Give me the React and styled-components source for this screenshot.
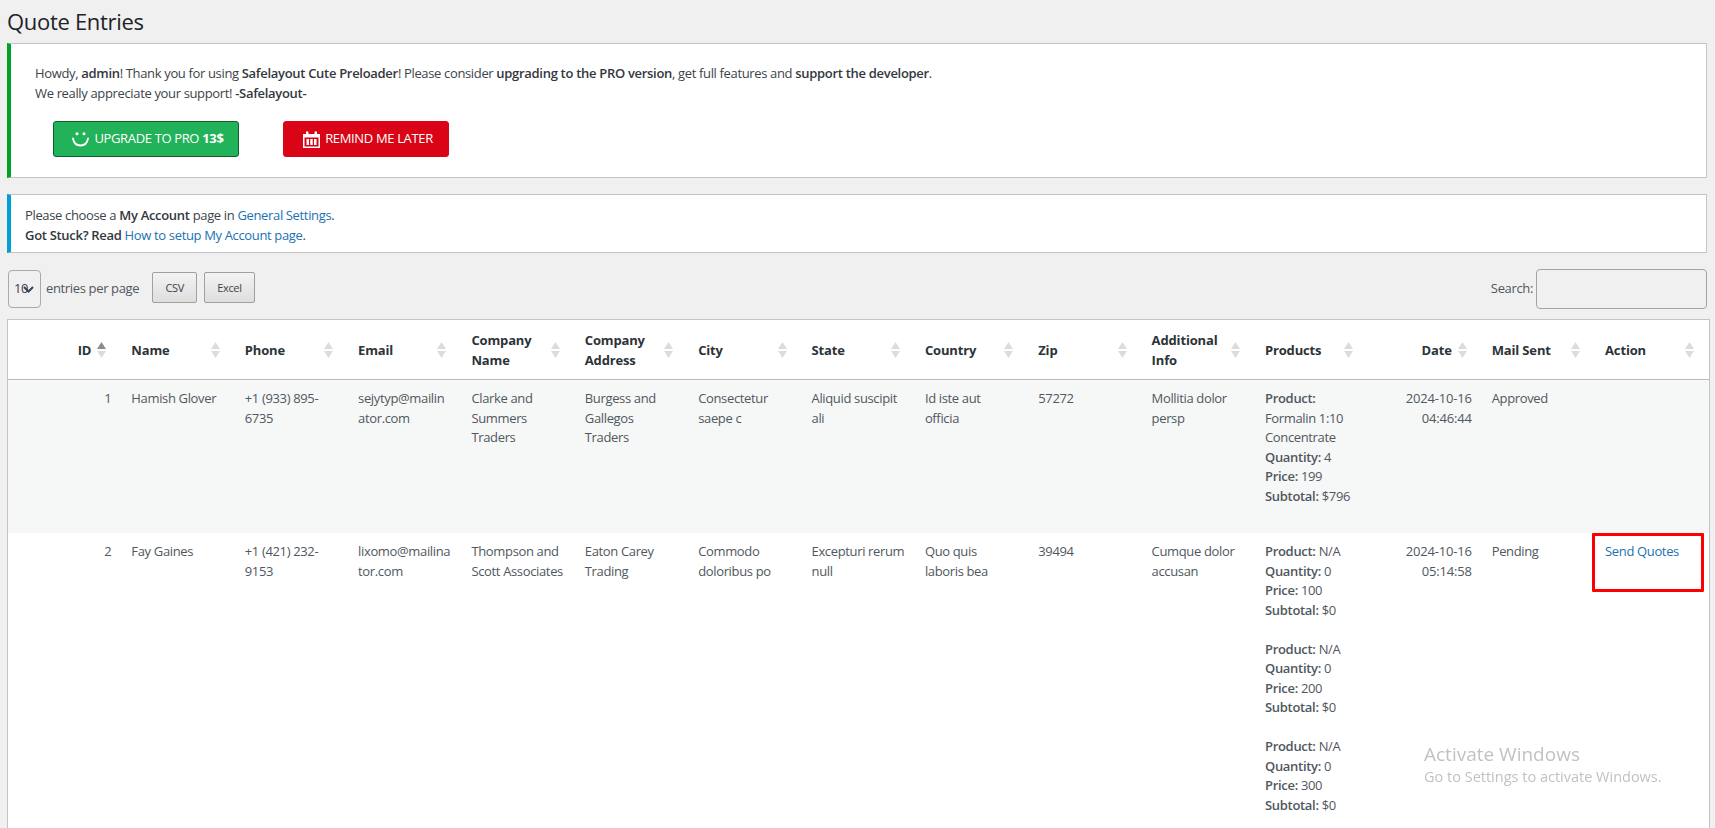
import React from "react";
import styled, { createGlobalStyle } from "styled-components";

const columns = [
  { label: "ID", right: true, sorted: true },
  { label: "Name" },
  { label: "Phone" },
  { label: "Email" },
  { label: "Company Name" },
  { label: "Company Address" },
  { label: "City" },
  { label: "State" },
  { label: "Country" },
  { label: "Zip" },
  { label: "Additional Info" },
  { label: "Products" },
  { label: "Date", right: true },
  { label: "Mail Sent" },
  { label: "Action" },
];

const entries = [
  {
    id: 1,
    cells: [
      "Hamish Glover",
      "+1 (933) 895-6735",
      "sejytyp@mailin\nator.com",
      "Clarke and Summers Traders",
      "Burgess and Gallegos Traders",
      "Consectetur saepe c",
      "Aliquid suscipit ali",
      "Id iste aut\nofficia",
      "57272",
      "Mollitia dolor persp",
    ],
    products: [{ name: "Formalin 1:10 Concentrate", quantity: 4, price: 199, subtotal: "$796" }],
    date: "2024-10-16 04:46:44",
    mail: "Approved",
  },
  {
    id: 2,
    cells: [
      "Fay Gaines",
      "+1 (421) 232-9153",
      "lixomo@mailina\ntor.com",
      "Thompson and Scott Associates",
      "Eaton Carey Trading",
      "Commodo doloribus po",
      "Excepturi rerum null",
      "Quo quis laboris bea",
      "39494",
      "Cumque dolor accusan",
    ],
    products: [
      { name: "N/A", quantity: 0, price: 100, subtotal: "$0" },
      { name: "N/A", quantity: 0, price: 200, subtotal: "$0" },
      { name: "N/A", quantity: 0, price: 300, subtotal: "$0" },
    ],
    date: "2024-10-16 05:14:58",
    mail: "Pending",
    action: "Send Quotes",
  },
];

const SmileIcon = () => (
  <svg width="17" height="15" viewBox="0 0 17 15" fill="none">
    <path d="M1 6.500c.8 4.500 3.500 7 7.500 7s6.700-2.500 7.500-7" stroke="#fff" strokeWidth="1.800" strokeLinecap="round" />
    <circle cx="5" cy="1.800" r="1.500" fill="#fff" />
    <circle cx="12" cy="1.800" r="1.500" fill="#fff" />
  </svg>
);

const CalendarIcon = () => (
  <svg width="17" height="17" viewBox="0 0 17 17" fill="#fff">
    <path d="M0 3h3V1.500a1.200 1.200 0 0 1 2.500 0V3h6V1.500a1.200 1.200 0 0 1 2.500 0V3h3v14H0z" />
    <path d="M1.500 6.500h14V15.500h-14z" fill="#d90416" />
    <path d="M3.500 8h2.500v6H3.500zM7.250 8h2.500v6h-2.500zM11 8h2.500v6H11z" />
  </svg>
);

const SortArrows = ({ active }) => (
  <svg width="9" height="16" viewBox="0 0 9 16">
    <path d="M4.500 0L9 7H0z" fill={active ? "#8a8d90" : "#dcdcde"} />
    <path d="M4.500 16L0 9h9z" fill="#dcdcde" />
  </svg>
);

const App = () => {
  return (
    <>
      <GlobalStyle />
      <Page>
        <Title>Quote Entries</Title>

        <Notice $accent="#00a32a" $padding="20px 24px">
          <NoticeText>
            Howdy, <b>admin</b>! Thank you for using <b>Safelayout Cute Preloader</b>! Please consider{" "}
            <b>upgrading to the PRO version</b>, get full features and <b>support the developer</b>.
            <br />
            We really appreciate your support! <b>-Safelayout-</b>
          </NoticeText>
          <NoticeActions>
            <ActionButton $bg="#22b35a" $border="#0f5c2c" $width="186px">
              <SmileIcon />
              <span>
                UPGRADE TO PRO <b>13$</b>
              </span>
            </ActionButton>
            <ActionButton $bg="#d90416" $border="#d90416" $width="166px">
              <CalendarIcon />
              <span>REMIND ME LATER</span>
            </ActionButton>
          </NoticeActions>
        </Notice>

        <Notice $accent="#00a0d2" $padding="11px 14px 7px">
          <NoticeText>
            Please choose a <b>My Account</b> page in <a href="#general">General Settings</a>.
            <br />
            <b>Got Stuck? Read</b> <a href="#setup">How to setup My Account page</a>.
          </NoticeText>
        </Notice>

        <Toolbar>
          <LengthGroup>
            <LengthSelect>
              10
              <svg width="11" height="8" viewBox="0 0 11 8" fill="none">
                <path d="M1 2l4.500 4.500L10 2" stroke="#3c434a" strokeWidth="2" />
              </svg>
            </LengthSelect>
            <ToolbarLabel>entries per page</ToolbarLabel>
            <ExportButton>CSV</ExportButton>
            <ExportButton>Excel</ExportButton>
          </LengthGroup>
          <SearchGroup>
            <ToolbarLabel>Search:</ToolbarLabel>
            <SearchInput type="search" aria-label="Search" />
          </SearchGroup>
        </Toolbar>

        <Table>
          <thead>
            <tr>
              {columns.map((col) => (
                <HeadCell key={col.label} $right={col.right}>
                  {col.label}
                  <SortSlot>
                    <SortArrows active={col.sorted} />
                  </SortSlot>
                </HeadCell>
              ))}
            </tr>
          </thead>
          <tbody>
            {entries.map((entry) => (
              <Row key={entry.id} $odd={entry.id % 2 === 1}>
                <Cell $right>{entry.id}</Cell>
                {entry.cells.map((text) => (
                  <Cell key={text}>{text}</Cell>
                ))}
                <Cell>
                  {entry.products.map((p) => (
                    <ProductBlock key={p.price}>
                      <b>Product:</b> {p.name}
                      <br />
                      <b>Quantity:</b> {p.quantity}
                      <br />
                      <b>Price:</b> {p.price}
                      <br />
                      <b>Subtotal:</b> {p.subtotal}
                    </ProductBlock>
                  ))}
                </Cell>
                <Cell $right>{entry.date}</Cell>
                <Cell>{entry.mail}</Cell>
                <ActionCell>
                  {entry.action && (
                    <>
                      <a href="#send">{entry.action}</a>
                      <Highlight />
                    </>
                  )}
                </ActionCell>
              </Row>
            ))}
          </tbody>
        </Table>

        <Watermark>
          <strong>Activate Windows</strong>
          <span>Go to Settings to activate Windows.</span>
        </Watermark>
      </Page>
    </>
  );
};

export default App;

const GlobalStyle = createGlobalStyle`
  html, body {
    margin: 0;
    height: 828px;
    overflow: hidden;
    background: #f0f0f1;
  }
  body {
    font-family: "Open Sans", "Noto Sans", sans-serif;
    font-size: 13px;
    line-height: 19.5px;
    color: #3c434a;
    letter-spacing: -0.35px;
  }
  a {
    color: #2271b1;
    text-decoration: none;
  }
  b {
    font-weight: 600;
    color: #32383e;
    letter-spacing: -0.3px;
  }
`;

const Page = styled.div`
  padding: 0 8px 0 7px;
`;

const Title = styled.h1`
  margin: 0;
  height: 43px;
  font-size: 22px;
  font-weight: 400;
  line-height: 43px;
  color: #1d2327;
  letter-spacing: -0.3px;
`;

const Notice = styled.div`
  box-sizing: border-box;
  margin-bottom: 16px;
  padding: ${(p) => p.$padding};
  background: #fff;
  border: 1px solid #c3c4c7;
  border-left: 4px solid ${(p) => p.$accent};
`;

const NoticeText = styled.p`
  margin: 0;
`;

const NoticeActions = styled.div`
  display: flex;
  gap: 44px;
  margin: 18px 0 0 18px;
`;

const ActionButton = styled.div`
  box-sizing: border-box;
  display: flex;
  align-items: center;
  justify-content: center;
  gap: 5px;
  width: ${(p) => p.$width};
  height: 36px;
  padding-left: 4px;
  background: ${(p) => p.$bg};
  border: 1px solid ${(p) => p.$border};
  border-radius: 3px;
  color: #fff;

  b {
    color: #fff;
    font-weight: 700;
  }
`;

const Toolbar = styled.div`
  display: flex;
  justify-content: space-between;
  align-items: center;
  height: 40px;
  margin: 16px 0 10px;
`;

const LengthGroup = styled.div`
  display: flex;
  align-items: center;
  padding-left: 1px;
`;

const LengthSelect = styled.div`
  box-sizing: border-box;
  display: flex;
  align-items: center;
  width: 33px;
  height: 38px;
  padding-left: 5px;
  border: 1px solid #a7aaad;
  border-radius: 4px;
  margin-right: 5px;

  svg {
    margin-left: -5px;
  }
`;

const ToolbarLabel = styled.span`
  color: #50575e;
`;

const ExportButton = styled.div`
  box-sizing: border-box;
  display: flex;
  align-items: center;
  justify-content: center;
  height: 31px;
  min-width: 45px;
  padding: 0 12px;
  margin-left: 7px;
  margin-top: -3px;
  font-size: 11px;
  color: #3c434a;
  background: linear-gradient(#f3f3f3, #dedede);
  border: 1px solid #a0a0a0;
  border-radius: 2px;

  ${ToolbarLabel} + & {
    margin-left: 13px;
  }
`;

const SearchGroup = styled.div`
  display: flex;
  align-items: center;
  gap: 3px;
`;

const SearchInput = styled.input`
  box-sizing: border-box;
  width: 171px;
  height: 40px;
  padding: 0 8px;
  background: transparent;
  border: 1px solid #a0a5aa;
  border-radius: 4px;
`;

const Table = styled.table`
  box-sizing: border-box;
  width: calc(100% + 2.5px);
  table-layout: fixed;
  border-collapse: separate;
  border-spacing: 0;
  background: #fff;
  border: 1px solid #c3c4c7;
  border-width: 1px 1px 0;
`;

const HeadCell = styled.th`
  position: relative;
  box-sizing: border-box;
  height: 59px;
  padding: 10px 30px 9px 10px;
  font-weight: 700;
  line-height: 20px;
  letter-spacing: -0.15px;
  color: #2c3338;
  text-align: ${(p) => (p.$right ? "right" : "left")};
  border-bottom: 1px solid #b8babd;
`;

const SortSlot = styled.span`
  position: absolute;
  top: 22px;
  right: 15px;
  display: flex;
`;

const Row = styled.tr`
  background: ${(p) => (p.$odd ? "#f6f7f7" : "#fff")};
`;

const Cell = styled.td`
  padding: 9px 10px 7.5px;
  vertical-align: top;
  white-space: pre-line;
  overflow-wrap: anywhere;
  text-align: ${(p) => (p.$right ? "right" : "left")};
  letter-spacing: ${(p) => (p.$right ? "-0.2px" : "inherit")};
  color: #50575e;
`;

const ActionCell = styled(Cell)`
  position: relative;
`;

const Highlight = styled.span`
  position: absolute;
  top: 0;
  left: -3px;
  width: 112px;
  height: 59px;
  box-sizing: border-box;
  border: 3px solid #f00;
  border-radius: 1px;
`;

const ProductBlock = styled.div`
  margin-bottom: 19.5px;

  b {
    color: #50575e;
  }
`;

const Watermark = styled.div`
  position: fixed;
  left: 1424px;
  top: 740px;
  display: flex;
  flex-direction: column;
  color: #c2c2c2;
  letter-spacing: 0;
  pointer-events: none;

  strong {
    font-size: 19px;
    font-weight: 400;
    line-height: 28px;
  }
  span {
    font-size: 14.5px;
    line-height: 18px;
  }
`;
